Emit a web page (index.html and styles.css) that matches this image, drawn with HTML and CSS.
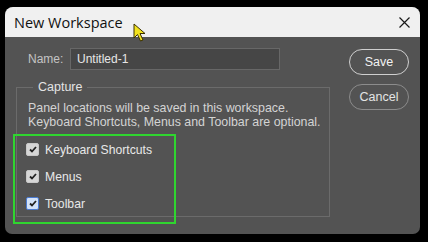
FILE: index.html
```html
<!doctype html>
<html>
<head>
    <meta charset="utf-8">
    <title>New Workspace</title>
    <link rel="stylesheet" href="styles.css">
</head>
<body>
<div class="dialog">
    <div class="titlebar">
        <span class="title">New Workspace</span>
        <span class="close">
            <svg width="11" height="11" viewBox="0 0 11 11"><path d="M0.5 0.5 L10.5 10.5 M10.5 0.5 L0.5 10.5" stroke="#1a1a1a" stroke-width="1.2" fill="none"/></svg>
        </span>
    </div>
    <div class="content">
        <div class="main">
            <div class="name-row">
                <label class="name-label">Name:</label>
                <div class="name-input">Untitled-1</div>
            </div>
            <fieldset class="group">
                <legend>Capture</legend>
                <div class="desc">
                    Panel locations will be saved in this workspace.<br>
                    Keyboard Shortcuts, Menus and Toolbar are optional.
                </div>
                <div class="options">
                    <div class="option"><span class="box"><svg width="8" height="7" viewBox="0 0 8 7"><path d="M1 3.5 L3 5.5 L7 1" stroke="#222" stroke-width="1.8" fill="none"/></svg></span>Keyboard Shortcuts</div>
                    <div class="option"><span class="box"><svg width="8" height="7" viewBox="0 0 8 7"><path d="M1 3.5 L3 5.5 L7 1" stroke="#222" stroke-width="1.8" fill="none"/></svg></span>Menus</div>
                    <div class="option"><span class="box focus"><svg width="8" height="7" viewBox="0 0 8 7"><path d="M1 3.5 L3 5.5 L7 1" stroke="#222" stroke-width="1.8" fill="none"/></svg></span>Toolbar</div>
                </div>
            </fieldset>
        </div>
        <div class="buttons">
            <div class="btn primary">Save</div>
            <div class="btn">Cancel</div>
        </div>
    </div>
    <div class="highlight"></div>
    <svg class="cursor" width="14" height="20" viewBox="0 0 14 20">
        <path d="M1 1 L1 15 L4.5 11.5 L7.5 18 L10 17 L7 10.5 L12 10.5 Z" fill="#f2e21c" stroke="#3a3000" stroke-width="1"/>
    </svg>
</div>
</body>
</html>
```

FILE: styles.css
```css
html, body {
    margin: 0;
    background: #000;
}
body {
    padding: 7px 0 0 5px;
    height: 242px;
    box-sizing: border-box;
    font-family: "Liberation Sans", Arial, sans-serif;
}
.dialog {
    position: relative;
    width: 415px;
    height: 227px;
    background: #535353;
    border-radius: 8px 8px 7px 7px;
    overflow: hidden;
}
.titlebar {
    height: 30px;
    background: #f0f0f0;
    display: flex;
    align-items: center;
    justify-content: space-between;
    padding: 0 10px 0 9px;
}
.title {
    font-family: "Open Sans", sans-serif;
    font-size: 14.5px;
    color: #111;
}
.close {
    display: flex;
    margin-top: 1px;
}
.content {
    display: flex;
    padding: 11px 10px 0 11px;
    color: #dcdcdc;
    font-size: 12px;
}
.main {
    width: 314px;
    flex-shrink: 0;
}
.name-row {
    display: flex;
    align-items: center;
    margin-left: 12px;
}
.name-label {
    color: #c4c4c4;
    width: 42px;
}
.name-input {
    width: 202px;
    height: 20px;
    line-height: 20px;
    padding-left: 6px;
    background: #464646;
    border: 1px solid #676767;
    color: #e6e6e6;
}
.group {
    margin: 10px 0 0 0;
    padding: 0 0 0 11px;
    height: 135px;
    border: 1px solid #6b6b6b;
}
.group legend {
    padding: 0 5px;
    margin-left: 5px;
    color: #e4e4e4;
    font-size: 12.5px;
}
.desc {
    font-size: 12.4px;
    line-height: 14px;
    color: #d4d4d4;
    margin-top: 7px;
    white-space: nowrap;
}
.options {
    margin-top: 7px;
    margin-left: -2px;
}
.option {
    display: flex;
    align-items: center;
    height: 27px;
    color: #e8e8e8;
    font-size: 12.2px;
}
.box {
    width: 11px;
    height: 11px;
    border-radius: 2px;
    background: #d6d6d6;
    border: 1px solid #c8c8c8;
    display: flex;
    align-items: center;
    justify-content: center;
    margin-right: 6px;
}
.box.focus {
    background: #d2e2f8;
    border-color: #4a7ad0;
}
.buttons {
    margin-left: 19px;
    display: flex;
    flex-direction: column;
    gap: 9px;
    padding-top: 1px;
}
.btn {
    width: 58px;
    height: 24px;
    line-height: 24px;
    text-align: center;
    border: 1.5px solid #8c8c8c;
    border-radius: 13px;
    color: #e4e4e4;
    font-size: 12.5px;
}
.btn.primary {
    border-color: #cfcfcf;
    color: #f2f2f2;
}
.highlight {
    position: absolute;
    left: 8px;
    top: 127px;
    width: 159px;
    height: 86px;
    border: 2px solid #2fd52f;
}
.cursor {
    position: absolute;
    left: 128px;
    top: 16px;
}
```
